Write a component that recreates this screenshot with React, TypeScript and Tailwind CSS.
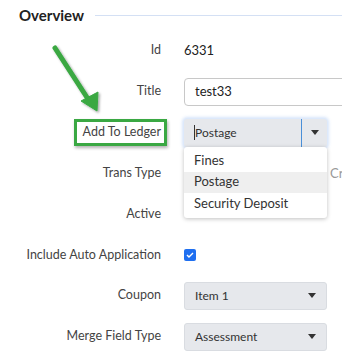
import React from 'react'

function Caret() {
  return (
    <svg width="8" height="5" viewBox="0 0 8 5" className="shrink-0">
      <path d="M0 0h8L4 5z" fill="#333" />
    </svg>
  )
}

function Row({
  label,
  children,
  boxed,
  className = 'h-[41px]',
}: {
  label: string
  children?: React.ReactNode
  boxed?: boolean
  className?: string
}) {
  return (
    <div className={`grid grid-cols-[161px_1fr] gap-x-[23px] items-center ${className}`}>
      <div className="flex justify-end text-[12.5px]">
        {boxed ? (
          <span className="border-[3px] border-[#3aa843] pl-[6px] pr-[3px] py-[1px] -mr-[6px] shadow-[1px_2px_3px_rgba(0,0,0,0.3)] text-[#444]">
            {label}
          </span>
        ) : (
          <span className="text-[#444]">{label}</span>
        )}
      </div>
      <div className="min-w-0">{children}</div>
    </div>
  )
}

function Select({ value }: { value: string }) {
  return (
    <div className="w-[143px] h-[28px] flex items-center justify-between pl-[10px] pr-[10px] bg-[#e6e8ec] border border-[#d9dce1] rounded-[3px] text-[12px] text-[#333]">
      <span>{value}</span>
      <Caret />
    </div>
  )
}

export default function App() {
  return (
    <div className="relative w-[342px] h-[358px] overflow-hidden bg-white font-['Lato',sans-serif] text-[13px]">
      <div className="flex items-center gap-[11px] pl-[19px] pt-[6px] h-[24px]">
        <h2 className="text-[15px] font-bold text-[#222]">Overview</h2>
        <div className="flex-1 h-px bg-[#d4e0f4]" />
      </div>

      <div className="pt-[4px]">
        <Row label="Id" className="h-[41px] pt-[4px]">
          <span className="text-[#222]">6331</span>
        </Row>
        <div className="h-[2px]" />
        <Row label="Title">
          <div className="w-[180px] h-[28px] flex items-center pl-[10px] border border-[#c8c8c8] rounded-[4px] text-[#222]">
            test33
          </div>
        </Row>
        <Row label="Add To Ledger" boxed>
          <div className="relative w-[143px] h-[28px] flex items-center bg-[#e6e8ec] rounded-[3px] shadow-[0_0_3px_2px_rgba(140,180,240,0.35)] text-[12px] text-[#333]">
            <span className="w-px h-[15px] bg-[#333] ml-[10px]" />
            <span className="flex-1">Postage</span>
            <div className="w-[26px] self-stretch border-l border-[#4a8fd8] flex items-center justify-center">
              <Caret />
            </div>
            <div className="absolute left-0 top-[28px] w-[143px] py-[3px] bg-white rounded-[3px] shadow-[0_1px_4px_rgba(0,0,0,0.25)] text-[13px] text-[#333] z-10">
              <div className="h-[22px] flex items-center px-[10px]">Fines</div>
              <div className="h-[21px] flex items-center px-[10px] bg-[#efefef]">Postage</div>
              <div className="h-[22px] flex items-center px-[10px]">Security Deposit</div>
            </div>
          </div>
        </Row>
        <Row label="Trans Type">
          <div className="flex">
            <span className="ml-[146px] text-[#999]">Credit</span>
          </div>
        </Row>
        <Row label="Active" />
        <Row label="Include Auto Application" className="h-[40px]">
          <div className="w-[12px] h-[12px] rounded-[2px] bg-[#1f6ff0] flex items-center justify-center">
            <svg width="8" height="6" viewBox="0 0 8 6">
              <path d="M1 3l2 2 4-4" stroke="white" strokeWidth="1.4" fill="none" />
            </svg>
          </div>
        </Row>
        <Row label="Coupon">
          <Select value="Item 1" />
        </Row>
        <Row label="Merge Field Type">
          <Select value="Assessment" />
        </Row>
      </div>

      <svg className="absolute left-0 top-0 pointer-events-none" width="342" height="358">
        <defs>
          <filter id="sh" x="-20%" y="-20%" width="140%" height="140%">
            <feDropShadow dx="1.5" dy="1.5" stdDeviation="1.2" floodColor="#000" floodOpacity="0.35" />
          </filter>
        </defs>
        <g filter="url(#sh)" fill="#3aa843" stroke="#3aa843">
          <line x1="55" y1="48" x2="88" y2="99" strokeWidth="5" strokeLinecap="round" />
          <path d="M81 101L98 92L97 111Z" strokeWidth="1" strokeLinejoin="round" />
        </g>
      </svg>
    </div>
  )
}
